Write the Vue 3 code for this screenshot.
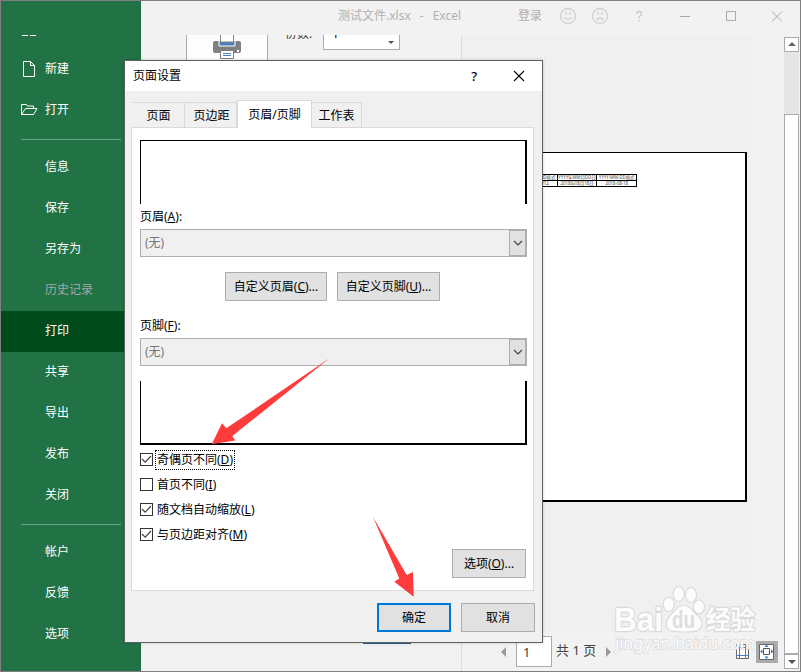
<template>
  <div class="window">
    <aside class="sidebar">
      <div class="back"><i></i><i></i></div>
      <div v-for="(group, g) in menu" :key="g" class="menu-group">
        <div
          v-for="item in group"
          :key="item.label"
          class="menu-item"
          :class="{ active: item.active, disabled: item.disabled }"
        >
          <svg v-if="item.icon === 'new'" class="menu-icon" width="18" height="18" viewBox="0 0 18 18">
            <path d="M2.5.5h7l4 4v11h-11zM9.5.5v4h4" />
          </svg>
          <svg v-if="item.icon === 'open'" class="menu-icon" width="18" height="18" viewBox="0 0 18 18">
            <path d="M.5 12.500v-10h5l1 1.500h6v2.500M.5 12.500l4-6h11.500l-3.500 6z" />
          </svg>
          <span>{{ item.label }}</span>
        </div>
      </div>
    </aside>

    <main class="main">
      <header class="titlebar">
        <span class="title">测试文件.xlsx<i>-</i>Excel</span>
        <span class="login">登录</span>
        <svg class="title-icons" width="240" height="20" viewBox="0 0 240 20">
          <g fill="none" stroke="#d2d2d2" stroke-width="1.3">
            <circle cx="9" cy="10" r="7.500" />
            <path d="M5.500 11.500q3.500 3.500 7 0M7 6v3M11 6v3" />
            <circle cx="41" cy="10" r="7.500" />
            <path d="M37.500 14q3.500-4 7 0M39 6v3M43 6v3" />
            <path d="M77.500 8q0-2.500 2.500-2.500t2.500 2.200q0 1.500-1.300 2.300t-1.200 2.500M80 14v1.500" stroke="#cacaca" />
          </g>
          <g fill="none" stroke="#a8a8a8">
            <path d="M121 10.500h10M167.500 5.500h9v9h-9zM213 5.500l10 10M223 5.500l-10 10" />
          </g>
        </svg>
      </header>

      <div class="content">
        <section class="settings">
          <div class="settings-top">
            <div class="print-button">
              <svg width="28" height="24" viewBox="0 0 28 24">
                <path d="M0 8q0-2 2-2h24q2 0 2 2v8q0 2-2 2H2q-2 0-2-2z" fill="#808080" />
                <path d="M6 6h16v5H6z" fill="#4a80bd" stroke="#fff" />
                <path d="M7.500-1v8h13v-8z" fill="#fff" stroke="#808080" />
                <path d="M7.500 15.500h13v8h-13z" fill="#fff" stroke="#808080" />
                <path d="M10 18.500h8M10 20.500h8" stroke="#4a80bd" />
                <path d="M24 15h2v2h-2z" fill="#fff" />
              </svg>
            </div>
            <span class="copies-label">份数:</span>
            <div class="copies-box"><span>1</span><i></i></div>
          </div>
          <a class="page-link">页面设置</a>
        </section>

        <section class="preview">
          <div class="canvas">
            <div class="paper">
              <table>
                <tbody>
                  <tr v-for="row in sheet" :key="row[0]">
                    <td v-for="cell in row" :key="cell"><div>{{ cell }}</div></td>
                  </tr>
                </tbody>
              </table>
            </div>
          </div>
          <footer class="pager">
            <i class="prev"></i>
            <span class="page-input">1</span>
            <span class="page-count">共 1 页</span>
            <i class="next"></i>
            <svg class="margin-icon" width="14" height="16" viewBox="0 0 14 16">
              <path d="M.5.500h12v14H.5z" fill="#fff" stroke="#666" />
              <path d="M3.500 0v15M9.500 0v15M0 3.500h13M0 11.500h13" stroke="#4a80bd" fill="none" />
            </svg>
            <span class="fit-button">
              <svg width="22" height="22" viewBox="0 0 22 22">
                <path d="M3.500 3.500h14v15h-14z" fill="#fff" stroke="#666" />
                <path d="M7.500 7.500h6v6h-6z" fill="#fff" stroke="#555" />
                <path d="M10.500 3.500l2 2.500h-4zM10.500 18l2-2.500h-4zM4 10.500l2.500-2v4zM17.500 10.500l-2.500-2v4z" fill="#3c78b5" />
              </svg>
            </span>
          </footer>
        </section>

        <div class="scrollbar">
          <div class="scroll-btn"><i class="up"></i></div>
          <div class="track"></div>
          <div class="thumb"></div>
          <div class="scroll-btn"><i class="down"></i></div>
        </div>
      </div>
    </main>

    <div class="dialog">
      <div class="dialog-title">
        <span>页面设置</span>
        <b>?</b>
        <svg width="12" height="12" viewBox="0 0 12 12">
          <path d="M1 1l10 10M11 1L1 11" stroke="#000" stroke-width="1.100" />
        </svg>
      </div>
      <div class="tabs">
        <div v-for="tab in tabs" :key="tab.label" class="tab" :class="[tab.size, { selected: tab.selected }]">
          {{ tab.label }}
        </div>
      </div>
      <div class="panel">
        <div class="sample header-sample"></div>
        <div class="label">页眉(<u>A</u>):</div>
        <div class="select">
          <span>(无)</span>
          <div class="select-arrow"><svg width="10" height="6" viewBox="0 0 10 6"><path d="M1 1l4 4 4-4" /></svg></div>
        </div>
        <div class="custom-buttons">
          <button class="btn header-btn">自定义页眉(<u>C</u>)...</button>
          <button class="btn footer-btn">自定义页脚(<u>U</u>)...</button>
        </div>
        <div class="label">页脚(<u>F</u>):</div>
        <div class="select">
          <span>(无)</span>
          <div class="select-arrow"><svg width="10" height="6" viewBox="0 0 10 6"><path d="M1 1l4 4 4-4" /></svg></div>
        </div>
        <div class="sample footer-sample"></div>
        <div class="checks">
          <div v-for="c in checks" :key="c.key" class="check">
            <span class="box">
              <svg v-if="c.on" width="11" height="11" viewBox="0 0 11 11"><path d="M1 5l3.200 3.200L10 2" /></svg>
            </span>
            <span class="check-text" :class="{ focused: c.focused }">{{ c.label }}(<u>{{ c.key }}</u>)</span>
          </div>
        </div>
        <button class="btn options">选项(<u>O</u>)...</button>
      </div>
      <div class="dialog-footer">
        <button class="btn primary">确定</button>
        <button class="btn">取消</button>
      </div>
    </div>

    <!-- 红色箭头 -->
    <svg class="overlay" width="801" height="672" viewBox="0 0 801 672">
      <g fill="#ff3b3b">
        <path d="M329.500 358.300L226.300 428.300 222 423.300 211.700 444.300 235.300 440.600 232.300 436z" />
        <path d="M373 517L399.300 578.500 394.300 581.700 413.700 596.700 413 572 406.700 575z" />
      </g>
    </svg>

    <!-- 水印 -->
    <svg class="overlay watermark" width="801" height="672" viewBox="0 0 801 672">
      <g fill="#fcfcfc" stroke="#dadada" stroke-width="1.200">
        <ellipse cx="668.700" cy="604.300" rx="5.500" ry="7.200" />
        <ellipse cx="678.700" cy="594" rx="5.500" ry="7.500" />
        <ellipse cx="691" cy="595" rx="5.500" ry="7.500" />
        <ellipse cx="699" cy="607" rx="5.500" ry="7" />
        <path d="M683.500 605c6 0 9 6 13 9.500 5 4 6.500 8 5 12-2 5-7 5.500-17.500 5.500s-16.500-1-17.500-6c-1-4 1-8 5-12s6-9 12-9z" />
        <g paint-order="stroke" stroke-width="2.400" stroke-linejoin="round">
          <text x="614" y="631" class="bai" textLength="49" lengthAdjust="spacingAndGlyphs">Bai</text>
          <text x="706" y="629" class="jy" textLength="49" lengthAdjust="spacingAndGlyphs">经验</text>
        </g>
        <text x="672" y="628" class="du" textLength="23" lengthAdjust="spacingAndGlyphs">du</text>
        <text x="615" y="649" class="site" paint-order="stroke" textLength="140" lengthAdjust="spacingAndGlyphs">jingyan.baidu.com</text>
      </g>
    </svg>
  </div>
</template>

<script setup>
const menu = [
  [
    { label: '新建', icon: 'new' },
    { label: '打开', icon: 'open' }
  ],
  [
    { label: '信息' },
    { label: '保存' },
    { label: '另存为' },
    { label: '历史记录', disabled: true },
    { label: '打印', active: true },
    { label: '共享' },
    { label: '导出' },
    { label: '发布' },
    { label: '关闭' }
  ],
  [{ label: '帐户' }, { label: '反馈' }, { label: '选项' }]
]

const tabs = [
  { label: '页面', size: 'w52' },
  { label: '页边距', size: 'w53' },
  { label: '页眉/页脚', size: 'w75', selected: true },
  { label: '工作表', size: 'w50' }
]

const checks = [
  { label: '奇偶页不同', key: 'D', on: true, focused: true },
  { label: '首页不同', key: 'I', on: false },
  { label: '随文档自动缩放', key: 'L', on: true },
  { label: '与页边距对齐', key: 'M', on: true }
]

const sheet = [
  ['YYYY/MM/DD格式', 'YYYY年MM月DD日', 'YYYY-MM-DD格式'],
  ['2018/10/12', '2018年08月18日', '2018-08-18']
]
</script>

<style>
body {
  margin: 0;
  overflow: hidden;
}
</style>

<style scoped>
* {
  box-sizing: border-box;
}

.window {
  position: relative;
  display: flex;
  width: 801px;
  height: 672px;
  border: 1px solid #808080;
  background: #f2f2f2;
  font-family: "Noto Sans", "Noto Sans CJK SC", sans-serif;
  font-size: 12px;
  line-height: 16px;
  color: #000;
  overflow: hidden;
  white-space: nowrap;
}

/* 左侧菜单 */
.sidebar {
  width: 140px;
  flex: none;
  background: #217346;
  color: #fff;
}

.back {
  display: flex;
  gap: 2px;
  height: 48px;
  padding: 34px 0 0 21px;
}

.back i {
  width: 6px;
  height: 1px;
  background: #fff;
}

.menu-group + .menu-group::before {
  content: '';
  display: block;
  width: 100px;
  height: 1px;
  margin: 8px 0 7px 20px;
  background: #63a881;
}

.menu-item {
  position: relative;
  display: flex;
  align-items: center;
  height: 41px;
  padding: 0 0 2px 44px;
}

.menu-item.active {
  background: #004b1c;
}

.menu-item.disabled {
  color: #a6a6a6;
}

.menu-icon {
  width: 18px;
  margin: 2px 6px 0 -24px;
  fill: none;
  stroke: #fff;
}

.main {
  flex: 1;
  min-width: 0;
  display: flex;
  flex-direction: column;
}

.titlebar {
  display: flex;
  align-items: center;
  height: 34px;
  padding: 0 4px 4px 197px;
  color: #b0b0b0;
}

.title {
  width: 180px;
  flex: none;
}

.title i {
  margin: 0 9px;
  font-style: normal;
}

.login {
  width: 41px;
  flex: none;
}

.title-icons {
  flex: none;
}

.content {
  flex: 1;
  display: flex;
  min-height: 0;
}

.settings {
  width: 321px;
  flex: none;
  display: flex;
  flex-direction: column;
  justify-content: space-between;
  border-right: 1px solid #dedede;
}

.settings-top {
  display: flex;
  height: 40px;
  padding-left: 45px;
  overflow: hidden;
}

.print-button {
  width: 82px;
  padding-left: 26px;
  border: solid #ababab;
  border-width: 0 1px;
  background: #fdfdfd;
}

.copies-label {
  margin: -9px 0 0 17px;
  width: 38px;
  color: #444;
}

.copies-box {
  display: flex;
  justify-content: space-between;
  width: 77px;
  height: 15px;
  padding: 0 5px 0 8px;
  border: 1px solid #ababab;
  border-top: 0;
  background: #fff;
  overflow: hidden;
}

.copies-box span {
  margin-top: -9px;
}

.copies-box i,
.down {
  width: 0;
  height: 0;
  margin-top: 6px;
  border: 3px solid transparent;
  border-top-color: #555;
  border-bottom: 0;
}

.page-link {
  height: 16px;
  margin: 0 0 25px 222px;
  color: #2b6195;
  text-decoration: underline;
}

.preview {
  flex: 1;
  min-width: 0;
  display: flex;
  flex-direction: column;
}

.canvas {
  width: 290px;
  height: 597px;
  padding-top: 117px;
  background: #f0f0f0;
}

.paper {
  width: 285px;
  height: 350px;
  padding-top: 21px;
  border: solid #000;
  border-width: 1px 2px 2px 1px;
  background: #fff;
}

table {
  width: 120px;
  margin-left: 54px;
  border-collapse: collapse;
  table-layout: fixed;
  font-size: 4.5px;
  line-height: 5px;
  text-align: center;
  color: #444;
}

td {
  height: 5px;
  padding: 0;
  border: 1px solid #000;
}

td div {
  display: flex;
  justify-content: center;
  height: 5px;
  letter-spacing: -0.1px;
}

.pager {
  flex: 1;
  display: flex;
  align-items: center;
  padding: 0 5px 0 39px;
  color: #444;
}

.pager > * {
  flex: none;
}

.prev,
.next {
  border: 5px solid transparent;
}

.prev {
  border-left: 0;
  border-right-color: #999;
}

.next {
  border-right: 0;
  border-left-color: #999;
  margin-left: 10px;
}

.page-input {
  width: 36px;
  height: 31px;
  margin-left: 10px;
  padding: 7px 6px;
  border: 1px solid #ababab;
  background: #fff;
  font-size: 13px;
}

.page-count {
  width: 40px;
  margin-left: 4px;
  margin-top: -3px;
  font-size: 13px;
}

.margin-icon {
  margin-left: 125px;
}

.fit-button {
  width: 22px;
  height: 22px;
  margin-left: 6px;
  background: #ababab;
}

.scrollbar {
  width: 15px;
  flex: none;
  margin: 2px 1px 2px 0;
  display: flex;
  flex-direction: column;
  background: #e6e6e6;
}

.scroll-btn {
  display: flex;
  justify-content: center;
  height: 15px;
  border: 1px solid #ababab;
  background: #fff;
}

.up {
  height: 0;
  margin-top: 4px;
  border: 4px solid transparent;
  border-bottom-color: #666;
  border-top: 0;
}

.down {
  margin-top: 5px;
  border-width: 4px 4px 0;
}

.track {
  height: 62px;
}

.thumb {
  flex: 1;
  border: 1px solid #ababab;
  background: #fff;
}

/* 页面设置对话框 */
.dialog {
  position: absolute;
  left: 123px;
  top: 59px;
  width: 419px;
  height: 583px;
  border: 1px solid #5e6360;
  background: #f0f0f0;
  box-shadow: 0 0 3px rgba(0, 0, 0, 0.2);
}

.dialog-title {
  display: flex;
  align-items: center;
  height: 30px;
  padding: 0 17px 0 8px;
  background: #fff;
}

.dialog-title b {
  margin: 0 36px 0 auto;
  font-size: 13px;
  font-weight: 500;
}

.tabs {
  position: relative;
  display: flex;
  align-items: flex-end;
  height: 37px;
  margin-bottom: -1px;
  padding-left: 8px;
  z-index: 1;
}

.tab {
  height: 26px;
  padding-top: 5px;
  border: 1px solid #d9d9d9;
  border-left: 0;
  text-align: center;
}

.tab.selected {
  height: 28px;
  padding-top: 6px;
  border-left: 1px solid #d9d9d9;
  border-bottom: 0;
  background: #fff;
}

.w50 { width: 50px; }
.w52 { width: 52px; }
.w53 { width: 52px; padding-left: 2px; }
.w75 { width: 75px; }

.panel {
  width: 403px;
  height: 464px;
  margin-left: 6px;
  padding: 12px 6px 0 8px;
  border: 1px solid #dcdcdc;
  background: #fff;
}

.sample {
  width: 387px;
  height: 64px;
  border: 0 solid #000;
  border-left-width: 1px;
  border-right-width: 2px;
}

.header-sample {
  border-top-width: 1px;
}

.footer-sample {
  margin-top: 15px;
  border-bottom-width: 2px;
}

.label {
  height: 16px;
  margin: 5px 0 4px;
}

.select {
  display: flex;
  align-items: center;
  justify-content: space-between;
  width: 387px;
  height: 28px;
  padding-left: 4px;
  border: 1px solid #adadb2;
  background: #f0f0f0;
  color: #777;
}

.select-arrow {
  display: flex;
  align-items: center;
  justify-content: center;
  width: 17px;
  height: 26px;
  border: 1px solid #adadb2;
  background: #e1e1e1;
}

.select-arrow path,
.box path {
  fill: none;
  stroke: #444;
  stroke-width: 1.2;
}

.custom-buttons {
  display: flex;
  gap: 10px;
  margin: 15px 0 15px 85px;
}

.custom-buttons + .label {
  margin-top: 17px;
}

.btn {
  width: 74px;
  height: 29px;
  padding: 0;
  border: 1px solid #adadad;
  background: #e1e1e1;
  font: inherit;
  color: #000;
}

.btn.header-btn {
  width: 102px;
}

.btn.footer-btn {
  width: 103px;
}

.btn.primary {
  border: 2px solid #0078d7;
}

.checks {
  margin-top: 2px;
}

.check {
  display: flex;
  align-items: center;
  height: 25px;
}

.box {
  display: flex;
  width: 13px;
  height: 13px;
  border: 1px solid #333;
}

.check-text {
  margin-left: 2px;
  padding: 1px;
  border: 1px solid transparent;
}

.check-text.focused {
  border: 1px dotted #000;
}

.options {
  display: block;
  margin: 2px 0 0 312px;
}

.dialog-footer {
  display: flex;
  justify-content: flex-end;
  gap: 10px;
  padding: 12px 7px 0;
}

.overlay {
  position: absolute;
  left: -1px;
  top: -1px;
  pointer-events: none;
}

.watermark text {
  font-family: "Liberation Sans", "Noto Sans CJK SC", sans-serif;
  font-weight: bold;
}

.bai {
  font-size: 34px;
}

.jy {
  font-size: 26px;
}

.watermark .du {
  font-size: 23px;
  fill: #dedede;
  stroke: none;
}

.watermark .site {
  font-family: "Noto Sans", sans-serif;
  font-size: 17px;
  font-weight: normal;
  stroke-width: 1.6px;
}
</style>
